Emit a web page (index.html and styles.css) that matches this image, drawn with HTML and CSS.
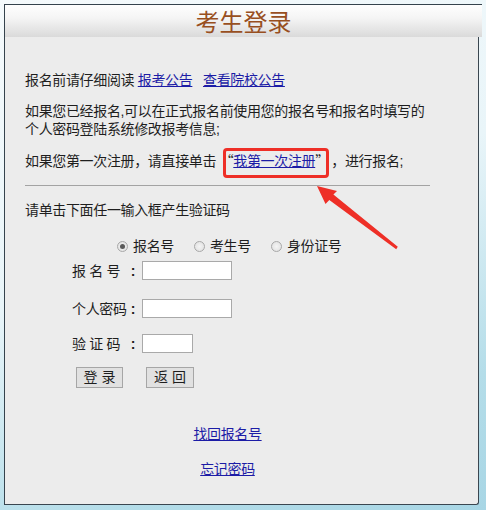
FILE: index.html
```html
<!DOCTYPE html>
<html lang="zh-CN">
<head>
<meta charset="utf-8">
<title>考生登录</title>
<link rel="stylesheet" href="styles.css">
</head>
<body>
<div class="frame">
  <div class="head">考生登录</div>
  <div class="main">
    <div class="col">
      <p class="l1">报名前请仔细阅读 <a href="#">报考公告</a>&nbsp;&nbsp; <a href="#">查看院校公告</a></p>
      <p class="para nw">如果您已经报名,可以在正式报名前使用您的报名号和报名时填写的<br>个人密码登陆系统修改报考信息;</p>
      <p class="para nw">如果您第一次注册，请直接单击 <span class="q">“</span><a href="#">我第一次注册</a><span class="q">”</span>&thinsp;，进行报名;</p>
      <hr class="rule">
      <p class="hint">请单击下面任一输入框产生验证码</p>
      <div class="radios">
        <label class="opt"><span class="radio on"></span>报名号</label>
        <label class="opt"><span class="radio"></span>考生号</label>
        <label class="opt"><span class="radio"></span>身份证号</label>
      </div>
      <div class="row r1"><span class="lab"><span>报&nbsp;名&nbsp;号</span><span class="colon">:</span></span><input class="txt" type="text"></div>
      <div class="row r2"><span class="lab"><span>个人密码</span><span class="colon">:</span></span><input class="txt" type="password"></div>
      <div class="row r3"><span class="lab"><span>验&nbsp;证&nbsp;码</span><span class="colon">:</span></span><input class="txt short" type="text"></div>
      <div class="btns">
        <button class="btn b1">登 录</button>
        <button class="btn b2">返 回</button>
      </div>
      <p class="link l-a"><a href="#">找回报名号</a></p>
      <p class="link l-b"><a href="#">忘记密码</a></p>
    </div>
  </div>
</div>
<div class="mark"></div>
<svg class="arrow" width="486" height="510" viewBox="0 0 486 510">
  <polygon points="317,186 325.5,204 329.3,200 396.2,249.2 397.8,246.8 333.4,194.6 337,191" fill="#ee2f27"/>
</svg>
</body>
</html>
```

FILE: styles.css
```css
html, body {
  margin: 0;
  padding: 0;
}
body {
  position: relative;
  width: 486px;
  height: 510px;
  overflow: hidden;
  background: linear-gradient(160deg, #f5fafc 0%, #e9f5f9 45%, #b4dde9 80%, #a8d6e5 100%);
  font-family: "Liberation Sans", "Noto Sans CJK SC", sans-serif;
  font-size: 14px;
  color: #1e1e1e;
  text-spacing-trim: space-all;
}
.frame {
  margin: 4px 0 0 4px;
  width: 477px;
  border-left: 1px solid #35434d;
  border-top: 1px solid #35434d;
}
.head {
  height: 32px;
  line-height: 32px;
  text-align: center;
  font-family: "Noto Sans CJK SC", sans-serif;
  font-size: 24px;
  color: #984f1f;
  background: linear-gradient(#fefefe 0%, #f5f5f5 40%, #dadada 100%);
}
.main {
  width: 473px;
  height: 467px;
  background: #ececec;
  border-right: 1px solid #3a4650;
  border-bottom: 1px solid #3a4650;
  border-bottom-right-radius: 3px;
}
.col {
  margin-left: 20px;
  width: 430px;
  letter-spacing: -0.35px;
}
p {
  margin: 0;
  line-height: 18px;
}
.nw {
  white-space: nowrap;
}
a {
  color: #1c1ca6;
  text-decoration: underline;
}
.q {
  font-family: "Noto Sans CJK SC", sans-serif;
}
.l1 {
  padding-top: 34px;
}
.para {
  margin-top: 13px;
}
.rule {
  width: 405px;
  margin: 15px 0 0 0;
  border: 0;
  border-top: 1px solid #a3a3a3;
  height: 0;
}
.hint {
  margin-top: 15px;
}
.radios {
  margin-top: 18px;
  height: 18px;
  padding-left: 92px;
  display: flex;
  align-items: center;
}
.opt {
  display: flex;
  align-items: center;
  line-height: 18px;
  margin-right: 20px;
}
.radio {
  width: 9px;
  height: 9px;
  border: 1px solid #a8a8a8;
  border-radius: 50%;
  background: radial-gradient(circle, #f4f4f4 0%, #dedede 100%);
  margin-right: 5px;
  position: relative;
}
.radio.on::after {
  content: "";
  position: absolute;
  left: 2px;
  top: 2px;
  width: 5px;
  height: 5px;
  border-radius: 50%;
  background: #5a5a5a;
}
.row {
  display: flex;
  align-items: center;
  padding-left: 47px;
  height: 19px;
}
.r1 { margin-top: 6px; }
.r2 { margin-top: 19px; }
.r3 { margin-top: 16px; }
.lab {
  flex: 0 0 70px;
  width: 70px;
  line-height: 18px;
  display: flex;
  justify-content: space-between;
  white-space: nowrap;
}
.colon {
  flex: 0 0 10px;
  width: 10px;
  margin-right: 4px;
  text-align: center;
  font-weight: bold;
}
.txt {
  box-sizing: border-box;
  width: 90px;
  height: 19px;
  margin: 0;
  padding: 0 2px;
  border: 1px solid #a9a9a9;
  background: #fff;
}
.txt.short {
  width: 51px;
}
.btns {
  margin-top: 14px;
  padding-left: 51px;
  display: flex;
  gap: 23px;
}
.btn {
  box-sizing: border-box;
  height: 21px;
  margin: 0;
  padding: 0;
  border: 1px solid #a6a6a6;
  background: #e1e1e1;
  font-family: "Liberation Sans", "Noto Sans CJK SC", sans-serif;
  font-size: 14px;
  line-height: 19px;
  color: #1e1e1e;
}
.b1 { width: 47px; }
.b2 { width: 48px; }
.link {
  width: 405px;
  text-align: center;
}
.l-a { margin-top: 37px; }
.l-b { margin-top: 17px; }
.mark {
  position: absolute;
  left: 223px;
  top: 148px;
  width: 106px;
  height: 30px;
  box-sizing: border-box;
  border: 3px solid #ee2f27;
  border-radius: 4px;
}
.arrow {
  position: absolute;
  left: 0;
  top: 0;
  pointer-events: none;
}
```
